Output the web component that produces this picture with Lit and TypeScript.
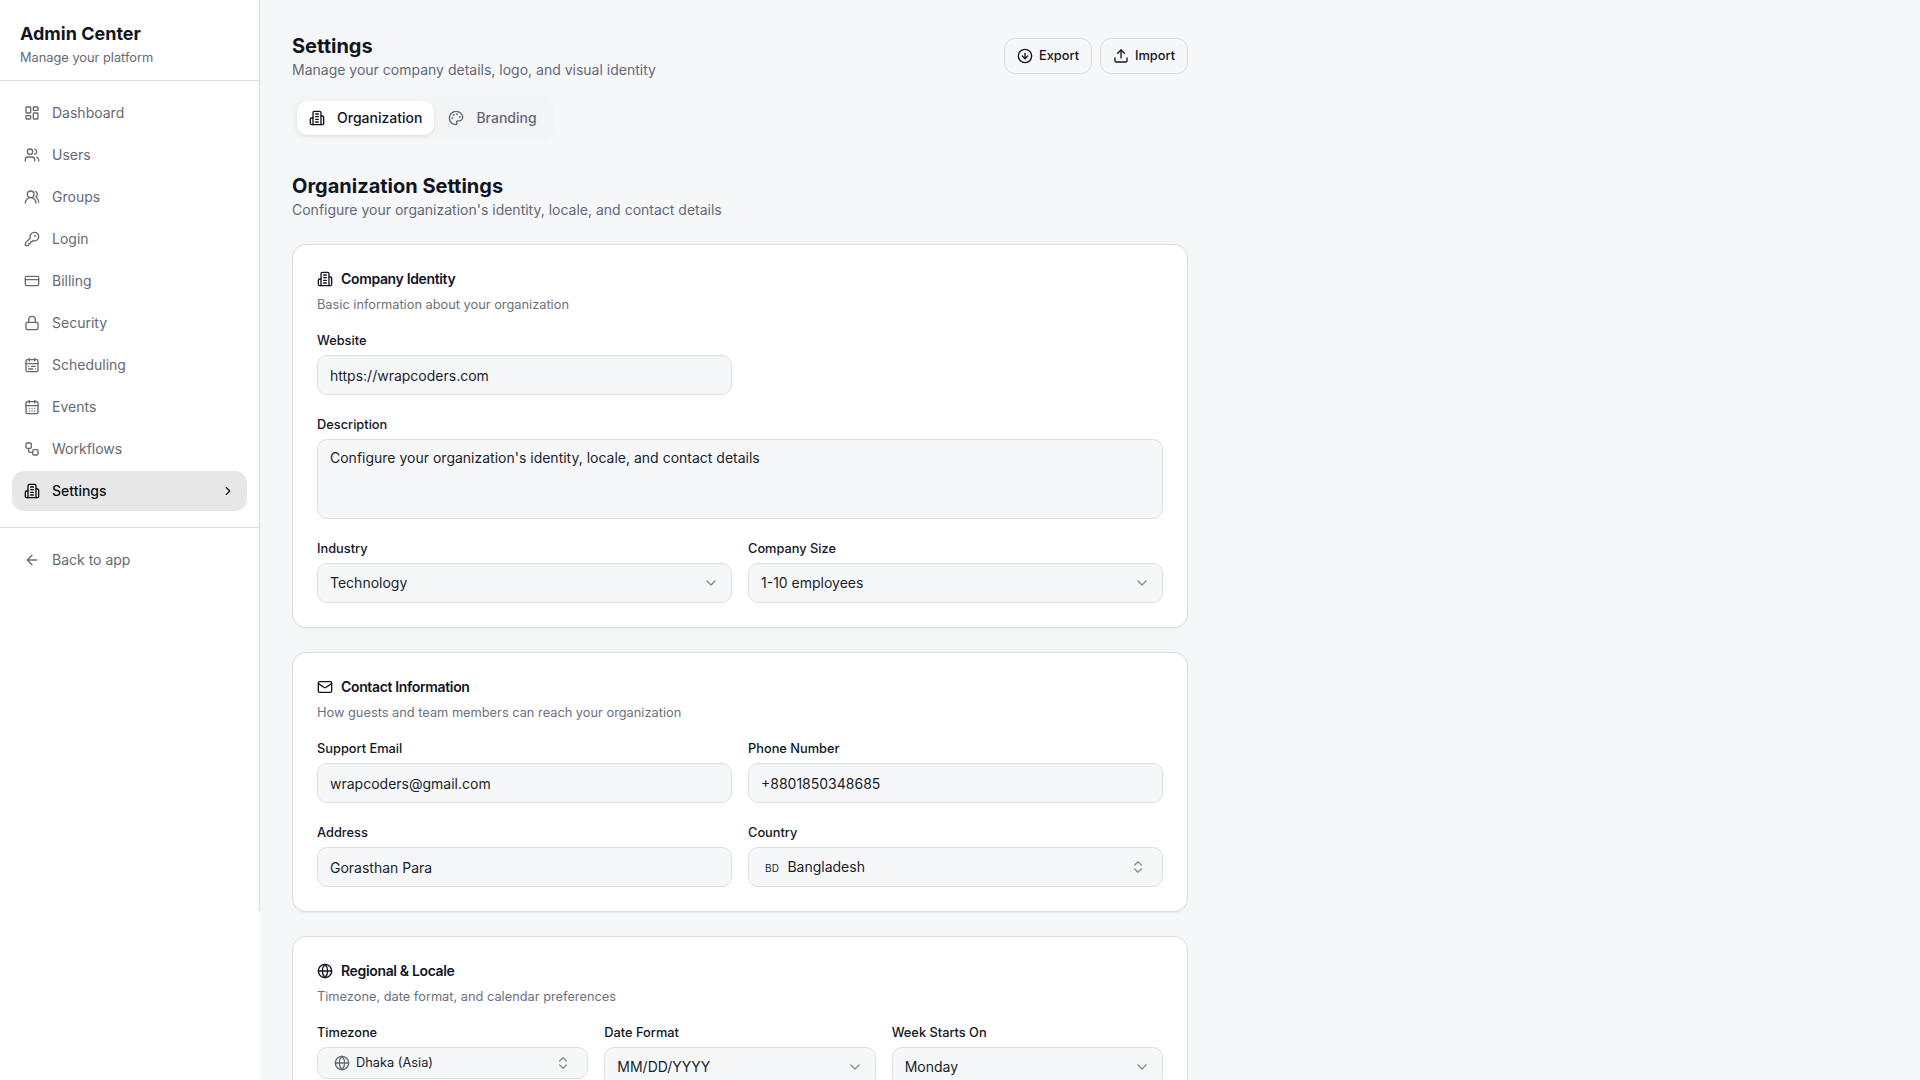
import { LitElement, css, html, svg } from "lit";
import { customElement, property } from "lit/decorators.js";
import { classMap } from "lit/directives/class-map.js";

// 24x24 stroke icons
const icons: Record<string, unknown> = {
    dashboard: svg`<rect width="7" height="9" x="3" y="3" rx="1"/><rect width="7" height="5" x="14" y="3" rx="1"/><rect width="7" height="9" x="14" y="12" rx="1"/><rect width="7" height="5" x="3" y="16" rx="1"/>`,
    users: svg`<path d="M16 21v-2a4 4 0 0 0-4-4H6a4 4 0 0 0-4 4v2"/><circle cx="9" cy="7" r="4"/><path d="M22 21v-2a4 4 0 0 0-3-3.87"/><path d="M16 3.13a4 4 0 0 1 0 7.75"/>`,
    groups: svg`<path d="M18 21a8 8 0 0 0-16 0"/><circle cx="10" cy="8" r="5"/><path d="M22 20c0-3.37-2-6.5-4-8a5 5 0 0 0-.45-8.3"/>`,
    key: svg`<path d="M2.586 17.414A2 2 0 0 0 2 18.828V21a1 1 0 0 0 1 1h3a1 1 0 0 0 1-1v-1a1 1 0 0 1 1-1h1a1 1 0 0 0 1-1v-1a1 1 0 0 1 1-1h.172a2 2 0 0 0 1.414-.586l.814-.814a6.5 6.5 0 1 0-4-4z"/><circle cx="16.5" cy="7.5" r=".5" fill="currentColor"/>`,
    card: svg`<rect width="20" height="14" x="2" y="5" rx="2"/><path d="M2 10h20"/>`,
    lock: svg`<rect width="18" height="11" x="3" y="11" rx="2"/><path d="M7 11V7a5 5 0 0 1 10 0v4"/>`,
    calendarRange: svg`<rect width="18" height="18" x="3" y="4" rx="2"/><path d="M16 2v4"/><path d="M3 10h18"/><path d="M8 2v4"/><path d="M17 14h-6"/><path d="M13 18H7"/><path d="M7 14h.01"/><path d="M17 18h.01"/>`,
    calendarDays: svg`<path d="M8 2v4"/><path d="M16 2v4"/><rect width="18" height="18" x="3" y="4" rx="2"/><path d="M3 10h18"/><path d="M8 14h.01"/><path d="M12 14h.01"/><path d="M16 14h.01"/><path d="M8 18h.01"/><path d="M12 18h.01"/><path d="M16 18h.01"/>`,
    workflow: svg`<rect width="8" height="8" x="3" y="3" rx="2"/><path d="M7 11v4a2 2 0 0 0 2 2h4"/><rect width="8" height="8" x="13" y="13" rx="2"/>`,
    building: svg`<path d="M6 22V4a2 2 0 0 1 2-2h8a2 2 0 0 1 2 2v18Z"/><path d="M6 12H4a2 2 0 0 0-2 2v6a2 2 0 0 0 2 2h2"/><path d="M18 9h2a2 2 0 0 1 2 2v9a2 2 0 0 1-2 2h-2"/><path d="M10 6h4"/><path d="M10 10h4"/><path d="M10 14h4"/><path d="M10 18h4"/>`,
    palette: svg`<circle cx="13.5" cy="6.5" r=".5" fill="currentColor"/><circle cx="17.5" cy="10.5" r=".5" fill="currentColor"/><circle cx="8.5" cy="7.5" r=".5" fill="currentColor"/><circle cx="6.5" cy="12.5" r=".5" fill="currentColor"/><path d="M12 2C6.5 2 2 6.5 2 12s4.5 10 10 10c.926 0 1.648-.746 1.648-1.688 0-.437-.18-.835-.437-1.125-.29-.289-.438-.652-.438-1.125a1.64 1.64 0 0 1 1.668-1.668h1.996c3.051 0 5.555-2.503 5.555-5.554C21.965 6.012 17.461 2 12 2z"/>`,
    arrowLeft: svg`<path d="m12 19-7-7 7-7"/><path d="M19 12H5"/>`,
    chevronRight: svg`<path d="m9 18 6-6-6-6"/>`,
    chevronDown: svg`<path d="m6 9 6 6 6-6"/>`,
    chevrons: svg`<path d="m7 15 5 5 5-5"/><path d="m7 9 5-5 5 5"/>`,
    export: svg`<circle cx="12" cy="12" r="10"/><path d="M12 8v8"/><path d="m8 12 4 4 4-4"/>`,
    import: svg`<path d="M21 15v4a2 2 0 0 1-2 2H5a2 2 0 0 1-2-2v-4"/><path d="m17 8-5-5-5 5"/><path d="M12 3v12"/>`,
    mail: svg`<rect width="20" height="16" x="2" y="4" rx="2"/><path d="m22 7-8.97 5.7a1.94 1.94 0 0 1-2.06 0L2 7"/>`,
    globe: svg`<circle cx="12" cy="12" r="10"/><path d="M12 2a14.5 14.5 0 0 0 0 20 14.5 14.5 0 0 0 0-20"/><path d="M2 12h20"/>`,
};

@customElement("ui-icon")
class UiIcon extends LitElement {
    @property() name = "";

    static styles = css`
        :host {
            display: block;
            flex: none;
            width: 16px;
            height: 16px;
        }
        svg {
            display: block;
            width: 100%;
            height: 100%;
        }
    `;

    render() {
        return html`
        <svg viewBox="0 0 24 24" fill="none" stroke="currentColor"
            stroke-width="2" stroke-linecap="round" stroke-linejoin="round">${icons[this.name]}</svg>
        `;
    }
}

@customElement("admin-sidebar")
class AdminSidebar extends LitElement {
    @property() active = "Settings";

    items = [
        { label: "Dashboard", icon: "dashboard" },
        { label: "Users", icon: "users" },
        { label: "Groups", icon: "groups" },
        { label: "Login", icon: "key" },
        { label: "Billing", icon: "card" },
        { label: "Security", icon: "lock" },
        { label: "Scheduling", icon: "calendarRange" },
        { label: "Events", icon: "calendarDays" },
        { label: "Workflows", icon: "workflow" },
        { label: "Settings", icon: "building" },
    ];

    static styles = css`
        :host {
            display: block;
            flex: none;
            width: 260px;
            background: #fff;
        }
        .panel {
            box-sizing: border-box;
            height: 911px;
            border-right: 1px solid #dcdee1;
        }
        .head {
            box-sizing: border-box;
            height: 81px;
            padding: 20px 20px 0;
            border-bottom: 1px solid #dcdee1;
        }
        .title {
            font-size: 18px;
            font-weight: 700;
            line-height: 28px;
            color: #11151f;
        }
        .sub {
            font-size: 12.8px;
            line-height: 20px;
            color: #646975;
        }
        nav {
            display: flex;
            flex-direction: column;
            gap: 2px;
            padding: 12px 12px 16px;
        }
        .item {
            display: flex;
            align-items: center;
            gap: 12px;
            height: 40px;
            padding: 0 12px;
            border-radius: 12px;
            color: #646975;
            font-size: 14px;
            line-height: 20px;
        }
        .item.active {
            background: #e7e7e7;
            color: #0c0f16;
            font-weight: 500;
        }
        .label {
            flex: 1;
        }
        .chevron {
            width: 14px;
            height: 14px;
        }
        .foot {
            padding: 12px;
            border-top: 1px solid #dcdee1;
        }
    `;

    render() {
        return html`
        <div class="panel">
            <div class="head">
                <div class="title">Admin Center</div>
                <div class="sub">Manage your platform</div>
            </div>
            <nav>
                ${this.items.map((item) => {
                    const active = item.label === this.active;
                    return html`
                    <div class=${classMap({ item: true, active })}>
                        <ui-icon name=${item.icon}></ui-icon>
                        <span class="label">${item.label}</span>
                        ${active ? html`<ui-icon class="chevron" name="chevronRight"></ui-icon>` : ""}
                    </div>`;
                })}
            </nav>
            <div class="foot">
                <div class="item">
                    <ui-icon name="arrowLeft"></ui-icon>
                    <span class="label">Back to app</span>
                </div>
            </div>
        </div>
        `;
    }
}

@customElement("form-field")
class FormField extends LitElement {
    @property() label = "";
    @property() value = "";
    // input | textarea | select | combo | combo-sm
    @property() kind = "input";
    @property() prefixText = "";
    @property() icon = "";

    static styles = css`
        :host {
            display: block;
            min-width: 0;
        }
        .label {
            height: 20px;
            margin-bottom: 4px;
            font-size: 12.8px;
            font-weight: 500;
            line-height: 19px;
            color: #11151f;
        }
        .control {
            box-sizing: border-box;
            display: flex;
            align-items: center;
            height: 40px;
            padding: 0 12px;
            border: 1px solid #dcdee1;
            border-radius: 10px;
            background: #f6f7f9;
            color: #1a1e28;
            font-size: 14px;
            line-height: 20px;
        }
        .input {
            padding-top: 2px;
        }
        .textarea {
            height: 80px;
            align-items: flex-start;
            padding-top: 8px;
        }
        .combo, .combo-sm {
            padding: 0 16px;
        }
        .combo-sm {
            height: 32px;
            font-size: 12.8px;
            line-height: 18px;
        }
        .value {
            flex: 1;
        }
        .code {
            margin-right: 8px;
            font-size: 10px;
            letter-spacing: 0.3px;
            padding-top: 2px;
        }
        .lead {
            margin-right: 6px;
            color: #646975;
        }
        .arrow {
            color: #888b91;
        }
    `;

    render() {
        const combo = this.kind.startsWith("combo");
        return html`
        <div class="label">${this.label}</div>
        <div class="control ${this.kind}">
            ${this.icon ? html`<ui-icon class="lead" name=${this.icon}></ui-icon>` : ""}
            ${this.prefixText ? html`<span class="code">${this.prefixText}</span>` : ""}
            <span class="value">${this.value}</span>
            ${combo ? html`<ui-icon class="arrow" name="chevrons"></ui-icon>` : ""}
            ${this.kind === "select" ? html`<ui-icon class="arrow" name="chevronDown"></ui-icon>` : ""}
        </div>
        `;
    }
}

@customElement("settings-card")
class SettingsCard extends LitElement {
    @property() heading = "";
    @property() description = "";
    @property() icon = "";

    static styles = css`
        :host {
            display: block;
            padding: 24px;
            border: 1px solid #dcdee1;
            border-radius: 14px;
            background: #fff;
            box-shadow: 0 1px 2px rgba(0, 0, 0, 0.05);
        }
        .heading {
            display: flex;
            align-items: center;
            gap: 8px;
            height: 20px;
            font-size: 14px;
            font-weight: 600;
            line-height: 20px;
            letter-spacing: -0.35px;
            color: #11151f;
        }
        .description {
            height: 20px;
            margin: 6px 0 16px;
            font-size: 12.8px;
            line-height: 19px;
            color: #6c717c;
        }
    `;

    render() {
        return html`
        <div class="heading"><ui-icon name=${this.icon}></ui-icon><span>${this.heading}</span></div>
        <div class="description">${this.description}</div>
        <slot></slot>
        `;
    }
}

@customElement("app-root")
class AppRoot extends LitElement {
    static styles = css`
        :host {
            display: flex;
            height: 100vh;
            overflow: hidden;
            background: #f6f7f9;
            font-family: Inter, "Liberation Sans", sans-serif;
            color: #11151f;
        }
        main {
            box-sizing: border-box;
            width: 960px;
            padding: 32px;
        }
        .top {
            display: flex;
            justify-content: space-between;
            height: 64px;
        }
        h1, h2 {
            margin: 0;
            font-size: 20px;
            font-weight: 700;
            line-height: 28px;
        }
        .sub {
            font-size: 14px;
            line-height: 20px;
            color: #646975;
        }
        .actions {
            display: flex;
            gap: 8px;
            padding-top: 6px;
        }
        .btn {
            box-sizing: border-box;
            display: flex;
            align-items: center;
            justify-content: center;
            gap: 6px;
            width: 88px;
            height: 36px;
            border: 1px solid #dcdee1;
            border-radius: 11px;
            font-size: 12.8px;
            font-weight: 500;
            line-height: 18px;
        }
        .tabs {
            box-sizing: border-box;
            display: flex;
            gap: 2px;
            width: 262px;
            height: 44px;
            padding: 5px;
            border-radius: 14px;
            background: #f3f4f5;
        }
        .tab {
            display: flex;
            align-items: center;
            gap: 12px;
            padding: 0 12px;
            border-radius: 10px;
            font-size: 14px;
            font-weight: 500;
            line-height: 20px;
            color: #646975;
        }
        .tab.active {
            background: #fff;
            color: #11151f;
            box-shadow: 0 1px 3px rgba(0, 0, 0, 0.1);
        }
        .intro {
            height: 72px;
            margin-top: 32px;
        }
        .cards {
            display: flex;
            flex-direction: column;
            gap: 24px;
        }
        .grid {
            display: grid;
            grid-template-columns: 1fr 1fr;
            gap: 20px 16px;
        }
        .grid.three {
            grid-template-columns: 1fr 1fr 1fr;
        }
        .wide {
            grid-column: 1 / -1;
        }
        .new-row {
            grid-column: 1;
        }
    `;

    render() {
        return html`
        <admin-sidebar></admin-sidebar>
        <main>
            <div class="top">
                <div>
                    <h1>Settings</h1>
                    <div class="sub">Manage your company details, logo, and visual identity</div>
                </div>
                <div class="actions">
                    <div class="btn"><ui-icon name="export"></ui-icon>Export</div>
                    <div class="btn"><ui-icon name="import"></ui-icon>Import</div>
                </div>
            </div>
            <div class="tabs">
                <div class="tab active"><ui-icon name="building"></ui-icon>Organization</div>
                <div class="tab"><ui-icon name="palette"></ui-icon>Branding</div>
            </div>
            <div class="intro">
                <h2>Organization Settings</h2>
                <div class="sub">Configure your organization's identity, locale, and contact details</div>
            </div>
            <div class="cards">
                <settings-card icon="building" heading="Company Identity" description="Basic information about your organization">
                    <div class="grid">
                        <form-field label="Website" value="https://wrapcoders.com"></form-field>
                        <form-field class="wide" kind="textarea" label="Description" value="Configure your organization's identity, locale, and contact details"></form-field>
                        <form-field class="new-row" kind="select" label="Industry" value="Technology"></form-field>
                        <form-field kind="select" label="Company Size" value="1-10 employees"></form-field>
                    </div>
                </settings-card>
                <settings-card icon="mail" heading="Contact Information" description="How guests and team members can reach your organization">
                    <div class="grid">
                        <form-field label="Support Email" value="wrapcoders@gmail.com"></form-field>
                        <form-field label="Phone Number" value="+8801850348685"></form-field>
                        <form-field label="Address" value="Gorasthan Para"></form-field>
                        <form-field kind="combo" label="Country" prefixText="BD" value="Bangladesh"></form-field>
                    </div>
                </settings-card>
                <settings-card icon="globe" heading="Regional &amp; Locale" description="Timezone, date format, and calendar preferences">
                    <div class="grid three">
                        <form-field kind="combo-sm" icon="globe" label="Timezone" value="Dhaka (Asia)"></form-field>
                        <form-field kind="select" label="Date Format" value="MM/DD/YYYY"></form-field>
                        <form-field kind="select" label="Week Starts On" value="Monday"></form-field>
                    </div>
                </settings-card>
            </div>
        </main>
        `;
    }
}
